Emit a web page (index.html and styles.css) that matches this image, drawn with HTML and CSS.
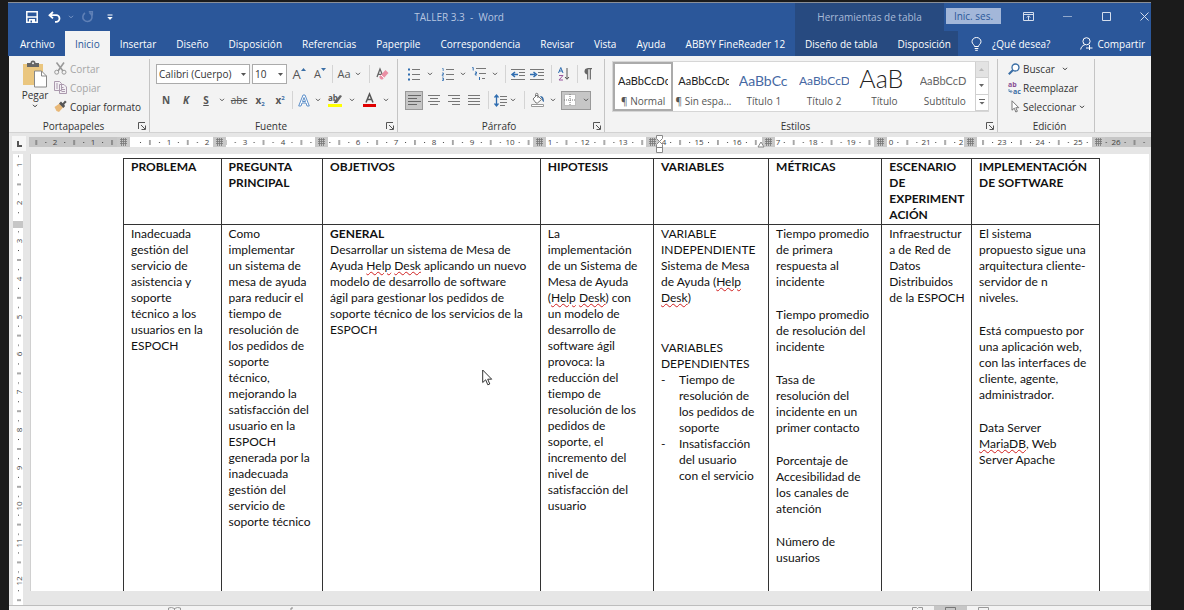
FILE: index.html
```html
<!DOCTYPE html>
<html lang="es">
<head>
<meta charset="utf-8">
<title>TALLER 3.3 - Word</title>
<link rel="stylesheet" href="styles.css">
</head>
<body>
<svg class="defs" aria-hidden="true">
  <symbol id="chev" viewBox="0 0 6 4"><path d="M1 .8 3 2.8 5 .8" fill="none" stroke="currentColor"/></symbol>
  <symbol id="tri" viewBox="0 0 5 3"><path d="M0 0h5L2.500 3z" fill="currentColor"/></symbol>
  <symbol id="launch" viewBox="0 0 8 8"><path d="M.5 7V.5H7M3 3l4 4M7.500 3.500v4h-4" fill="none" stroke="#555"/></symbol>
</svg>
<div class="app">
  <header class="titlebar">
    <div class="quick">
      <button class="q" aria-label="Guardar"><svg width="12" height="12" viewBox="0 0 12 12"><path d="M.8.8h10.400v10.400H.8z" fill="none" stroke="#fff" stroke-width="1.500"/><path d="M1 6h10" fill="none" stroke="#fff" stroke-width="1.500"/><path d="M3 8h6v3.500H3z" fill="#fff"/><path d="M4.500 9.500h1.500v2H4.500z" fill="#2b579a"/></svg></button>
      <button class="q" aria-label="Deshacer"><svg width="13" height="12" viewBox="0 0 13 12"><path d="M5 1 1.500 4.200 5 7.400M2 4.200h6.200a3.300 3.300 0 0 1 0 6.600H7" fill="none" stroke="#fff" stroke-width="1.800"/></svg></button>
      <button class="qs dim" aria-label="Opciones de deshacer"><svg width="6" height="4"><use href="#chev"/></svg></button>
      <button class="q redo" aria-label="Rehacer"><svg width="13" height="12" viewBox="0 0 13 12"><path d="M8.500 1.800a4.600 4.600 0 1 1-4.500.2M7.800.8h3.500v3.700" fill="none" stroke="currentColor" stroke-width="1.600"/></svg></button>
      <button class="q" aria-label="Personalizar"><svg width="6" height="7" viewBox="0 0 6 7"><path d="M.5 1h5" stroke="#fff"/><path d="M.3 3h5.400L3 6z" fill="#fff"/></svg></button>
    </div>
    <h1 class="title">TALLER 3.3&nbsp; -&nbsp; Word</h1>
    <div class="right">
      <div class="ctx-title">Herramientas de tabla</div>
      <button class="login">Inic. ses.</button>
      <div class="wincontrols">
        <button aria-label="Opciones de la cinta"><svg width="11" height="9" viewBox="0 0 11 9"><path d="M.5.5h10v8H.5zM.5 2.500h10M5.500 8V4M3.800 5.500 5.500 3.800l1.700 1.700" fill="none" stroke="currentColor"/></svg></button>
        <button aria-label="Minimizar"><svg width="9" height="9"><path d="M0 4.500h9" stroke="currentColor" opacity=".6"/></svg></button>
        <button aria-label="Maximizar"><svg width="9" height="9"><path d="M.5.5h8v8h-8z" fill="none" stroke="currentColor"/></svg></button>
        <button aria-label="Cerrar"><svg width="9" height="9"><path d="m.5.5 8 8m0-8-8 8" stroke="currentColor"/></svg></button>
      </div>
    </div>
  </header>
  <nav class="tabs">
    <div class="main-tabs">
      <button>Archivo</button><button class="on">Inicio</button><button>Insertar</button><button>Diseño</button><button>Disposición</button><button>Referencias</button><button>Paperpile</button><button>Correspondencia</button><button>Revisar</button><button>Vista</button><button>Ayuda</button><button>ABBYY FineReader 12</button>
    </div>
    <div class="right">
      <div class="ctx-tabs"><button>Diseño de tabla</button><button>Disposición</button></div>
      <button class="tell"><svg width="11" height="14" viewBox="0 0 11 14"><path d="M3.500 9.500C3.500 7.700 1 7 1 4.700a4.500 4.200 0 0 1 9 0C10 7 7.500 7.700 7.500 9.500zM3.700 11.500h3.600M4.200 13.300h2.600" fill="none" stroke="#fff"/></svg>¿Qué desea?</button>
      <button class="share"><svg width="13" height="13" viewBox="0 0 13 13"><circle cx="6.500" cy="4.300" r="3.600" fill="none" stroke="#fff"/><path d="M.7 12.500c.3-2.400 1.800-4 4-4.600M6 11h6.500M9.500 8v5" fill="none" stroke="#fff"/></svg>Compartir</button>
    </div>
  </nav>

  <section class="ribbon">
    <div class="group clip">
      <div class="clip-body">
        <button class="paste"><svg width="26" height="27" viewBox="0 0 26 27"><path d="M1 3h20v21H1z" fill="#eac67f"/><path d="M5 2h3.500a2.500 2.500 0 0 1 5 0H17v4H5z" fill="#666"/><circle cx="11" cy="2.200" r="1" fill="#f3f3f3"/><path d="M12.500 10h7l5 5v11h-12z" fill="#fff" stroke="#888"/><path d="M19.500 10v5h5" fill="none" stroke="#888"/></svg>Pegar<svg width="6" height="4"><use href="#chev"/></svg></button>
        <div class="stack">
          <button class="off"><svg width="13" height="13" viewBox="0 0 13 13"><path d="M2.500.5 9 9M10 .5 4 9" fill="none" stroke="#999" stroke-width="1.600"/><circle cx="2.700" cy="10.200" r="2" fill="none" stroke="#999"/><circle cx="10" cy="10.200" r="2" fill="none" stroke="#999"/></svg>Cortar</button>
          <button class="off"><svg width="13" height="13" viewBox="0 0 13 13"><path d="M.5.5h5l2 2v7h-7zM5.500 3.500h4.500l2.500 2.500v6.500h-7z" fill="#f3f0f4" stroke="#ab9aae"/><path d="M2 3h2M2 5h2M2 7h2M7.500 6.500h2M7.500 8.500h3.500M7.500 10.500h3.500" stroke="#ab9aae"/></svg>Copiar</button>
          <button><svg width="13" height="13" viewBox="0 0 13 13"><path d="m.5 7 5-3.500 3.500 4L5 12 2.500 11z" fill="#e8b878"/><path d="m5 3.500 2-2 1.700 1.700L11 .5 12.700 2 10.300 4.300l.7 1.900-1.700 1.700z" fill="#555"/></svg>Copiar formato</button>
        </div>
      </div>
      <div class="caption"><span>Portapapeles</span><button aria-label="Portapapeles, opciones"><svg width="8" height="8"><use href="#launch"/></svg></button></div>
    </div>

    <div class="group font">
      <div class="row">
        <label class="combo name"><select aria-label="Fuente"><option>Calibri (Cuerpo)</option></select><svg width="5" height="3"><use href="#tri"/></svg></label>
        <label class="combo size"><select aria-label="Tamaño"><option>10</option></select><svg width="5" height="3"><use href="#tri"/></svg></label>
        <button class="w22 big">A<svg class="sup" width="5" height="3" viewBox="0 0 5 3"><path d="M0 3h5L2.500 0z" fill="#3a6ea5"/></svg></button>
        <button class="w20 mid">A<svg class="sup" width="5" height="3" viewBox="0 0 5 3"><path d="M0 0h5L2.500 3z" fill="#3a6ea5"/></svg></button>
        <i class="sep w4"></i>
        <button class="w20 aa">Aa</button><button class="w8" aria-label="Mayúsculas"><svg width="6" height="4"><use href="#chev"/></svg></button>
        <i class="sep w14"></i>
        <button class="w12" aria-label="Borrar formato"><svg width="13" height="13" viewBox="0 0 13 13"><path d="M1 9 4 1l2.500 6M2 6.300h3.500" fill="none" stroke="#666" stroke-width="1.300"/><path d="m3.500 8.500 6-6.500L12.500 5l-6 6.500H5L3.500 10z" fill="#ea8fa4"/><path d="m5 7 3.200 3" stroke="#fff"/></svg></button>
      </div>
      <div class="row">
        <button class="w20 bold">N</button><button class="w20 bold"><em>K</em></button><button class="w20 bold"><u>S</u></button><button class="w12" aria-label="Subrayado"><svg width="6" height="4"><use href="#chev"/></svg></button>
        <button class="w22 strike">abc</button><button class="w20 bold">x<sub>2</sub></button><button class="w20 bold">x<sup>2</sup></button>
        <i class="sep w4"></i>
        <button class="w20" aria-label="Efectos de texto"><svg width="12" height="13" viewBox="0 0 12 13"><path d="M.7 12 5 1h2l4.300 11H9L8 9H4l-1 3z" fill="#fff" stroke="#5d8fc9"/><path d="m4.500 7.500 1.500-4 1.500 4z" fill="none" stroke="#5d8fc9"/></svg></button><button class="w8" aria-label="Efectos, opciones"><svg width="6" height="4"><use href="#chev"/></svg></button>
        <button class="w26 mark" aria-label="Resaltado"><svg width="15" height="14" viewBox="0 0 15 14"><path d="M0 11h14v3H0z" fill="#ff0"/><text x="0" y="8" class="ab">ab</text><path d="m6 9 6-7 2 1-5 7H6z" fill="#666"/></svg></button><button class="w8" aria-label="Resaltado, opciones"><svg width="6" height="4"><use href="#chev"/></svg></button>
        <button class="w26" aria-label="Color de fuente"><svg width="13" height="14" viewBox="0 0 13 14"><path d="M0 11h13v3H0z" fill="#e00000"/><path d="M3 9.500 6.500 1 10 9.500M4.300 6.500h4.400" fill="none" stroke="#555" stroke-width="1.500"/></svg></button><button class="w8" aria-label="Color, opciones"><svg width="6" height="4"><use href="#chev"/></svg></button>
      </div>
      <div class="caption"><span>Fuente</span><button aria-label="Fuente, opciones"><svg width="8" height="8"><use href="#launch"/></svg></button></div>
    </div>

    <div class="group para">
      <div class="row">
        <button class="w18" aria-label="Viñetas"><svg width="12" height="13" viewBox="0 0 12 13"><path d="M4 1.500h8M4 6.500h8M4 11.500h8" stroke="#777"/><path d="M0 .5h2v2H0zM0 5.500h2v2H0zM0 10.500h2v2H0z" fill="#2f6db0"/></svg></button><button class="w14" aria-label="Viñetas, opciones"><svg width="6" height="4"><use href="#chev"/></svg></button>
        <button class="w22" aria-label="Numeración"><svg width="12" height="13" viewBox="0 0 12 13"><path d="M4 1.500h8M4 6.500h8M4 11.500h8" stroke="#777"/><path d="M.3.500h.9V3M0 5h1.500v1.500H.3V8h1.400M0 10h1.500v2.500H0M.5 11.300h1" fill="none" stroke="#2f6db0" stroke-width=".8"/></svg></button><button class="w8" aria-label="Numeración, opciones"><svg width="6" height="4"><use href="#chev"/></svg></button>
        <button class="w24" aria-label="Lista multinivel"><svg width="14" height="14" viewBox="0 0 14 14"><path d="M4 1.500h10M7 6.500h7M10 11.500h3" stroke="#777"/><path d="M.3.500h.9V3.500M3 5h1.500v1.500H3.300V8h1.500M7.500 10v3" fill="none" stroke="#2f6db0"/></svg></button><button class="w8" aria-label="Lista multinivel, opciones"><svg width="6" height="4"><use href="#chev"/></svg></button>
        <i class="sep w12"></i>
        <button class="w14" aria-label="Reducir sangría"><svg width="14" height="11" viewBox="0 0 14 11"><path d="M0 .5h14M8 3.500h6M8 6.500h6M0 10.500h14" stroke="#777"/><path d="M7 5.500H2M4 3 1 5.500 4 8" fill="none" stroke="#2f6db0" stroke-width="1.500"/></svg></button>
        <button class="w24" aria-label="Aumentar sangría"><svg width="14" height="11" viewBox="0 0 14 11"><path d="M0 .5h14M8 3.500h6M8 6.500h6M0 10.500h14" stroke="#777"/><path d="M0 5.500h5M3.500 3l3 2.500-3 2.500" fill="none" stroke="#2f6db0" stroke-width="1.500"/></svg></button>
        <i class="sep w4"></i>
        <button class="w22" aria-label="Ordenar"><svg width="12" height="14" viewBox="0 0 12 14"><path d="M.5 6 2.800.5 5 6M1.300 4h3" fill="none" stroke="#2f6db0"/><path d="M1 8.500h4L1 13h4" fill="none" stroke="#9b59a0"/><path d="M9 1v11M7 10l2 2.300L11 10" fill="none" stroke="#555"/></svg></button>
        <i class="sep w4"></i>
        <button class="w16" aria-label="Mostrar todo"><svg width="9" height="12" viewBox="0 0 9 12"><path d="M4.500.7h4.500M4.700.5v11M7.300.5v11" fill="none" stroke="#666" stroke-width="1.200"/><path d="M4.700.2v6.300a3.100 3.100 0 0 1 0-6.300z" fill="#666"/></svg></button>
      </div>
      <div class="row">
        <button class="w18 pressed" aria-label="Alinear a la izquierda"><svg width="13" height="10" viewBox="0 0 13 10"><path d="M0 .5h13M0 3.500h9M0 6.500h13M0 9.500h9" stroke="#666"/></svg></button>
        <button class="w22" aria-label="Centrar"><svg width="12" height="10" viewBox="0 0 12 10"><path d="M0 .5h12M2 3.500h8M0 6.500h12M2 9.500h8" stroke="#777"/></svg></button>
        <button class="w18" aria-label="Alinear a la derecha"><svg width="12" height="10" viewBox="0 0 12 10"><path d="M0 .5h12M4 3.500h8M0 6.500h12M4 9.500h8" stroke="#777"/></svg></button>
        <button class="w22" aria-label="Justificar"><svg width="12" height="10" viewBox="0 0 12 10"><path d="M0 .5h12M0 3.500h12M0 6.500h12M0 9.500h12" stroke="#777"/></svg></button>
        <i class="sep w6"></i>
        <button class="w18" aria-label="Espaciado"><svg width="13" height="13" viewBox="0 0 13 13"><path d="M6 2.500h7M6 5.500h7M6 8.500h7M6 11.500h5" stroke="#777"/><path d="M2.500 1v11M.5 3.500l2-2.500 2 2.500M.5 9.500l2 2.500 2-2.500" fill="none" stroke="#2f6db0" stroke-width="1.300"/></svg></button><button class="w8" aria-label="Espaciado, opciones"><svg width="6" height="4"><use href="#chev"/></svg></button>
        <i class="sep w14"></i>
        <button class="w14" aria-label="Sombreado"><svg width="14" height="14" viewBox="0 0 14 14"><path d="M.5 11.500h12v2H.5z" fill="#fff" stroke="#999"/><path d="m2 6 4-4 4.500 4.500-4 3.500H5z" fill="#fff" stroke="#777"/><path d="M4.500 4V1.500a1.200 1.200 0 0 1 2.400 0V5" fill="none" stroke="#777"/><path d="M9 3c3 0 4 2 4 6-1.500-.5-2-2-2-3z" fill="#3a6ea5"/></svg></button><button class="w16" aria-label="Sombreado, opciones"><svg width="6" height="4"><use href="#chev"/></svg></button>
        <button class="w30 pressed borders" aria-label="Bordes"><svg width="12" height="12" viewBox="0 0 12 12"><path d="M0 0h12v12H0z" fill="#fff"/><path d="M.5.5h11v11H.5zM6 0v12M0 6h12" fill="none" stroke="#777" stroke-dasharray="1 1"/></svg><svg width="6" height="4"><use href="#chev"/></svg></button>
      </div>
      <div class="caption"><span>Párrafo</span><button aria-label="Párrafo, opciones"><svg width="8" height="8"><use href="#launch"/></svg></button></div>
    </div>

    <div class="group styles">
      <div class="gallery">
        <button class="style sel"><span class="s body">AaBbCcDc</span><span>¶ Normal</span></button>
        <button class="style"><span class="s body">AaBbCcDc</span><span>¶ Sin espa...</span></button>
        <button class="style"><span class="s h1">AaBbCc</span><span>Título 1</span></button>
        <button class="style"><span class="s h2">AaBbCcD</span><span>Título 2</span></button>
        <button class="style"><span class="s tt">AaB</span><span>Título</span></button>
        <button class="style"><span class="s st">AaBbCcD</span><span>Subtítulo</span></button>
        <div class="scroll">
          <button class="dis" aria-label="Subir"><svg width="5" height="3" viewBox="0 0 5 3"><path d="M0 3h5L2.500 0z" fill="#bbb"/></svg></button>
          <button aria-label="Bajar"><svg width="5" height="3"><use href="#tri"/></svg></button>
          <button aria-label="Más"><svg width="6" height="6" viewBox="0 0 6 6"><path d="M0 .5h6" stroke="#666"/><path d="M.5 3h5L3 5.500z" fill="#666"/></svg></button>
        </div>
      </div>
      <div class="caption"><span>Estilos</span><button aria-label="Estilos, opciones"><svg width="8" height="8"><use href="#launch"/></svg></button></div>
    </div>

    <div class="group edit">
      <div class="stack">
        <button><svg width="12" height="12" viewBox="0 0 12 12"><circle cx="7.500" cy="4.500" r="3.500" fill="#fff" stroke="#3a6ea5" stroke-width="1.300"/><path d="M5 7 .8 11.200" stroke="#3a6ea5" stroke-width="2"/></svg>Buscar<svg class="gap" width="6" height="4"><use href="#chev"/></svg></button>
        <button class="replace"><svg width="14" height="13" viewBox="0 0 14 13"><text x="0" y="6" class="ab2">ab</text><text x="5" y="13" class="ab2 blue">ac</text><path d="M1 8v2.500h2.500M2.500 9l1.500 1.500L2.500 12" fill="none" stroke="#3a6ea5" stroke-width=".8"/></svg>Reemplazar</button>
        <button><svg width="12" height="13" viewBox="0 0 12 13"><path d="M4 .8v9.400l2.300-2 1.500 3.800 1.600-.7-1.600-3.600h3z" fill="#fff" stroke="#777"/></svg>Seleccionar<svg width="6" height="4"><use href="#chev"/></svg></button>
      </div>
      <div class="caption"><span>Edición</span></div>
    </div>
    <div class="rest"></div>
  </section>

  <div class="hruler">
    <div class="tabstop"><svg width="5" height="6"><path d="M1 0v5h4" fill="none" stroke="#555" stroke-width="2"/></svg></div>
    <svg class="scale" height="20" role="img" aria-label="Regla horizontal">
      <defs>
        <pattern id="ticks" x="102" y="0" width="37.870" height="20" patternUnits="userSpaceOnUse"><path d="M9 9h1v1H9zM28 9h1v1h-1z" fill="#444"/><path d="M18.900 7v5" stroke="#555"/></pattern>
        <symbol id="mk" viewBox="0 0 13 10"><path d="M0 0h13v10H0z" fill="#c9c9c9"/><path d="M4.500 1v8M6.500 1v8M8.500 1v8M3 2.500h7M3 4.500h7M3 6.500h7" stroke="#777" stroke-width=".8"/></symbol>
      </defs>
      <rect y="4" width="100%" height="10" fill="#fff"/>
      <rect y="4" width="101" height="10" fill="#c6c6c6"/>
      <rect x="1063" y="4" width="100%" height="10" fill="#c6c6c6"/>
      <rect width="100%" height="20" fill="url(#ticks)"/>
      <g class="num"><text x="26" y="12">2</text><text x="64" y="12">1</text><text x="140" y="12">1</text><text x="178" y="12">2</text><text x="216" y="12">3</text><text x="254" y="12">4</text><text x="329" y="12">6</text><text x="367" y="12">7</text><text x="405" y="12">8</text><text x="443" y="12">9</text><text x="481" y="12">10</text><text x="521" y="12">1</text><text x="556" y="12">12</text><text x="594" y="12">13</text><text x="635" y="12">4</text><text x="670" y="12">15</text><text x="708" y="12">16</text><text x="749" y="12">7</text><text x="784" y="12">18</text><text x="822" y="12">19</text><text x="862" y="12">0</text><text x="897" y="12">21</text><text x="932" y="12">2</text><text x="973" y="12">23</text><text x="1011" y="12">24</text><text x="1049" y="12">25</text><text x="1087" y="12">26</text></g>
      <use href="#mk" x="88" y="4" width="13" height="10"/><use href="#mk" x="184" y="4" width="13" height="10"/><use href="#mk" x="286" y="4" width="13" height="10"/><use href="#mk" x="504" y="4" width="13" height="10"/><use href="#mk" x="617" y="4" width="13" height="10"/><use href="#mk" x="733" y="4" width="13" height="10"/><use href="#mk" x="845" y="4" width="13" height="10"/><use href="#mk" x="935" y="4" width="13" height="10"/><use href="#mk" x="1063" y="4" width="13" height="10"/>
      <path d="M627.500 2.500h6v3l-3 3 3 3v8h-6v-8l3-3-3-3zM627.500 14.500h6M729 14l3-5 3 5z" fill="#fff" stroke="#888"/>
    </svg>
  </div>

  <main class="work">
    <svg class="vruler" width="10" role="img" aria-label="Regla vertical">
      <defs><pattern id="vt" x="0" y="-26.300" width="10" height="37.800" patternUnits="userSpaceOnUse"><path d="M5 9h1v1H5zM5 28h1v1H5z" fill="#444"/><path d="M4 18.900h4" stroke="#555"/></pattern></defs>
      <rect width="10" height="100%" fill="#fff"/><rect width="10" height="100%" fill="url(#vt)"/>
      <rect y="67" width="10" height="7" fill="#c6c6c6"/>
      <g class="num"><text transform="translate(9 11) rotate(-90)">1</text><text transform="translate(9 49) rotate(-90)">2</text><text transform="translate(9 87) rotate(-90)">3</text><text transform="translate(9 125) rotate(-90)">4</text><text transform="translate(9 163) rotate(-90)">5</text><text transform="translate(9 200) rotate(-90)">6</text><text transform="translate(9 238) rotate(-90)">7</text><text transform="translate(9 276) rotate(-90)">8</text><text transform="translate(9 314) rotate(-90)">9</text><text transform="translate(9 352) rotate(-90)">10</text><text transform="translate(9 389) rotate(-90)">11</text><text transform="translate(9 427) rotate(-90)">12</text></g>
    </svg>
    <div class="page">
      <table>
        <colgroup><col class="c1"><col class="c2"><col class="c3"><col class="c4"><col class="c5"><col class="c4"><col class="c7"><col class="c8"></colgroup>
        <thead><tr><th>PROBLEMA</th><th>PREGUNTA<br>PRINCIPAL</th><th>OBJETIVOS</th><th>HIPOTESIS</th><th>VARIABLES</th><th>MÉTRICAS</th><th>ESCENARIO<br>DE<br>EXPERIMENT<br>ACIÓN</th><th>IMPLEMENTACIÓN<br>DE SOFTWARE</th></tr></thead>
        <tbody><tr>
          <td>Inadecuada<br>gestión del<br>servicio de<br>asistencia y<br>soporte<br>técnico a los<br>usuarios en la<br>ESPOCH</td>
          <td>Como<br>implementar<br>un sistema de<br>mesa de ayuda<br>para reducir el<br>tiempo de<br>resolución de<br>los pedidos de<br>soporte<br>técnico,<br>mejorando la<br>satisfacción del<br>usuario en la<br>ESPOCH<br>generada por la<br>inadecuada<br>gestión del<br>servicio de<br>soporte técnico</td>
          <td><b>GENERAL</b><br>Desarrollar un sistema de Mesa de<br>Ayuda <span class="err">Help</span> <span class="err">Desk</span> aplicando un nuevo<br>modelo de desarrollo de software<br>ágil para gestionar los pedidos de<br>soporte técnico de los servicios de la<br>ESPOCH</td>
          <td>La<br>implementación<br>de un Sistema de<br>Mesa de Ayuda<br>(<span class="err">Help</span> <span class="err">Desk</span>) con<br>un modelo de<br>desarrollo de<br>software ágil<br>provoca: la<br>reducción del<br>tiempo de<br>resolución de los<br>pedidos de<br>soporte, el<br>incremento del<br>nivel de<br>satisfacción del<br>usuario</td>
          <td><p class="wide">VARIABLE<br>INDEPENDIENTE<br>Sistema de Mesa<br>de Ayuda (<span class="err">Help</span><br><span class="err">Desk</span>)</p>VARIABLES<br>DEPENDIENTES<ul><li>Tiempo de<br>resolución de<br>los pedidos de<br>soporte</li><li>Insatisfacción<br>del usuario<br>con el servicio</li></ul></td>
          <td><p>Tiempo promedio<br>de primera<br>respuesta al<br>incidente</p><p>Tiempo promedio<br>de resolución del<br>incidente</p><p>Tasa de<br>resolución del<br>incidente en un<br>primer contacto</p><p>Porcentaje de<br>Accesibilidad de<br>los canales de<br>atención</p><p>Número de<br>usuarios</p></td>
          <td>Infraestructur<br>a de Red de<br>Datos<br>Distribuidos<br>de la ESPOCH</td>
          <td><p>El sistema<br>propuesto sigue una<br>arquitectura cliente-<br>servidor de n<br>niveles.</p><p>Está compuesto por<br>una aplicación web,<br>con las interfaces de<br>cliente, agente,<br>administrador.</p><p>Data Server<br><span class="err">MariaDB</span>, Web<br>Server Apache</p></td>
        </tr></tbody>
      </table>
      <svg class="pointer" width="11" height="17" viewBox="0 0 11 17"><path d="M.7 1v12.500l3-2.700 2.100 5 2-.8-2.100-4.800h4z" fill="#fff" stroke="#333"/></svg>
    </div>
  </main>
  <footer class="status">
    <svg width="13" height="3" viewBox="0 0 13 3"><path d="M.5 3V1l3-.5 3 1 3-1 3 .5v2M6.500 1v2" fill="none" stroke="#999"/></svg>
    <svg class="prf" width="3" height="3"><path d="M0 2h2V0" fill="none" stroke="#888"/></svg>
    <div class="views">
      <button aria-label="Modo lectura"><svg width="11" height="3"><path d="M.5 3V.5h4l1 1 1-1h4V3" fill="none" stroke="#999"/></svg></button>
      <button class="cur" aria-label="Diseño de impresión"><svg width="11" height="3"><path d="M.5 3V.5h10V3" fill="none" stroke="#777"/></svg></button>
      <button aria-label="Diseño web"><svg width="11" height="3"><path d="M.5 3V.5h10V3" fill="none" stroke="#999"/></svg></button>
    </div>
  </footer>
</div>
</body>
</html>
```
FILE: styles.css
```css
* { box-sizing: border-box; }
body { margin: 0; background: #1b1b1b; font: 10px/14px "Open Sans", "Noto Sans", sans-serif; color: #333; overflow: hidden; }
button { font: inherit; color: inherit; background: none; border: 0; padding: 0; margin: 0; display: flex; align-items: center; justify-content: center; white-space: nowrap; }
svg { display: block; flex: none; }
button svg { overflow: visible; }
.defs { position: absolute; width: 0; height: 0; }
.app { height: 100vh; padding: 2px 33px 0 8px; display: flex; flex-direction: column; }
.titlebar, .tabs { display: flex; background: #2b579a; color: #fff; flex: none; }
.titlebar { height: 29px; border-top: 1px solid #8a8f98; }
.right { width: 356px; display: flex; flex: none; }
.quick { width: 115px; display: flex; align-items: center; padding-left: 15px; }
.q { width: 21px; height: 20px; margin-right: 4px; }
.qs { width: 8px; height: 20px; margin-right: 3px; }
.dim { color: #7d9ac7; }
.redo { color: #5f80b6; }
.title { flex: 1; margin: 0; font-size: 10px; font-weight: 400; line-height: 28px; text-align: center; color: #b7c6e0; }
.ctx-title { width: 149px; background: #274a80; color: #a9bbd8; text-align: center; line-height: 28px; }
.login { width: 55px; height: 16px; margin: 5px 0 0 2px; background: #a3b7d9; color: #2b579a; }
.wincontrols { flex: 1; display: flex; height: 26px; align-items: center; justify-content: space-between; padding: 0 2px 0 22px; color: #d5deed; }
.tabs { height: 25px; }
.main-tabs { flex: 1; min-width: 0; display: flex; padding-left: 2px; }
.main-tabs button, .ctx-tabs button { padding: 0 10px; }
.main-tabs .on { background: #f3f3f3; color: #2b579a; }
.ctx-tabs { width: 163px; display: flex; background: #274a80; }
.tell { gap: 10px; margin-left: 13px; }
.share { gap: 4px; margin-left: auto; margin-right: 6px; }

.ribbon { display: flex; flex: none; height: 77px; padding-top: 3px; background: #f3f3f3; border-bottom: 1px solid #d2d2d2; margin-left: 1px; }
.group { display: flex; flex-direction: column; border-right: 1px solid #c4c4c4; height: 73px; }
.caption { margin-top: auto; height: 12px; display: flex; align-items: center; padding-right: 3px; flex: none; }
.caption span { flex: 1; text-align: center; }
.clip { width: 141px; }
.font { width: 248px; padding: 5px 0 0 6px; }
.para { width: 207px; padding: 5px 0 0 7px; }
.styles { flex: 1; padding-top: 2px; }
.edit { width: 97px; padding-left: 10px; }
.rest { width: 56px; }
.clip-body { display: flex; padding: 0 0 0 13px; }
.paste { flex-direction: column; width: 26px; margin-right: 6px; height: 51px; }
.paste svg:last-child { margin-top: 2px; }
.stack { display: flex; flex-direction: column; }
.stack button { height: 19px; gap: 3px; justify-content: flex-start; }
.stack .replace { gap: 1px; }
.off { color: #a6a6a6; }
.gap { margin-left: 4px; }
.row { display: flex; align-items: center; height: 20px; margin-bottom: 6px; flex: none; }
.row button { height: 19px; color: #555; }
.sep { height: 18px; background: linear-gradient(#d4d4d4, #d4d4d4) center / 1px 100% no-repeat; }
.w4 { width: 4px; } .w6 { width: 6px; } .w8 { width: 8px; } .w12 { width: 12px; } .w14 { width: 14px; } .w16 { width: 16px; } .w18 { width: 18px; } .w20 { width: 20px; } .w22 { width: 22px; } .w24 { width: 24px; } .w26 { width: 26px; } .w30 { width: 30px; }
.combo { display: grid; height: 20px; align-items: center; margin-right: 2px; color: #555; }
.combo > * { grid-area: 1 / 1; }
.combo svg { justify-self: end; margin-right: 4px; pointer-events: none; }
.combo select { appearance: none; width: 100%; height: 20px; border: 1px solid #ababab; border-radius: 0; background: #fff; font: inherit; color: #333; padding: 0 2px; }
.name { width: 94px; } .size { width: 35px; margin-right: 1px; }
.row .big { font-size: 13px; } .row .mid { font-size: 11px; } .aa { font-size: 11px; }
.sup { align-self: flex-start; margin-top: 3px; }
.bold { font-weight: 700; }
.strike { text-decoration: line-through; }
sub, sup { font-size: 6px; line-height: 6px; color: #3a6ea5; }
sub { align-self: flex-end; margin-bottom: 3px; } sup { align-self: flex-start; margin-top: 4px; }
.ab { font: 700 8px "Open Sans", sans-serif; fill: #555; }
.ab2 { font: 700 7px "Open Sans", sans-serif; fill: #8a4f93; }
.blue { fill: #3a6ea5; }
.row .pressed { background: #c6c6c6; outline: 1px solid #999; outline-offset: -1px; }
.borders { gap: 7px; }
.gallery { display: flex; height: 51px; background: #fff; border: 1px solid #d6d6d6; margin: 0 8px 0 7px; }
.style { flex: 1; min-width: 0; flex-direction: column; overflow: hidden; color: #555; border: 2px solid transparent; padding: 0 3px; }
.sel { border-color: #ababab; }
.s { width: 100%; height: 28px; line-height: 30px; overflow: hidden; text-align: left; color: #222; font-family: Lato, sans-serif; font-size: 11px; }
.s.h1 { font-size: 14px; color: #4668a3; }
.s.h2 { font-size: 12px; color: #4668a3; }
.s.tt { font-size: 25px; line-height: 24px; font-weight: 300; }
.s.st { color: #666; }
.scroll { width: 13px; display: flex; flex-direction: column; border-left: 1px solid #d0d0d0; color: #666; }
.scroll button { flex: 1; border-bottom: 1px solid #d0d0d0; }
.scroll .dis { background: #e3e3e3; }

.hruler { display: flex; flex: none; height: 21px; background: #e6e6e6; margin-left: 1px; }
.tabstop { width: 20px; display: flex; align-items: center; justify-content: center; background: #f6f6f6; border: 3px solid #e6e6e6; }
.scale { flex: 1; min-width: 0; }
.num { font-family: "Open Sans", sans-serif; font-size: 8px; fill: #444; text-anchor: middle; }
.work { flex: 1; min-height: 0; display: flex; background: #e6e6e6; margin-left: 1px; padding-left: 4px; }
.vruler { height: 100%; margin-right: 7px; }
.page { flex: 1; position: relative; margin: 0 2px 14px 0; padding: 4px 49px 0 92px; background: #fff; border-left: 1px solid #d0d0d0; overflow: hidden; font: 12px/16px Lato, sans-serif; font-variant-ligatures: none; color: #111; }
table { width: 100%; height: 100%; border-collapse: collapse; table-layout: fixed; border-bottom-style: hidden; }
.c1 { width: 10%; } .c2 { width: 10.400%; } .c3 { width: 22.300%; } .c4 { width: 11.600%; } .c5 { width: 11.800%; } .c7 { width: 9.200%; } .c8 { width: 13.100%; }
th, td { border: 1px solid #333; padding: 1px 0 0 7px; text-align: left; vertical-align: top; white-space: nowrap; }
th { height: 66px; padding-top: 0; font-weight: 700; }
p { margin: 0 0 17px; }
.wide { margin-bottom: 34px; }
ul { list-style: none; margin: 0; padding: 0 0 0 18px; }
li::before { content: "-"; float: left; margin-left: -18px; }
.err { text-decoration: underline wavy #d02020 1px; text-underline-offset: 1px; }
.pointer { position: absolute; left: 451px; top: 215px; }
.status { height: 5px; flex: none; display: flex; margin-left: 1px; padding-left: 159px; padding-right: 151px; background: #f3f3f3; border-top: 1px solid #bdbdbd; overflow: hidden; align-items: flex-end; }
.prf { margin-left: 109px; }
.views { margin-left: auto; display: flex; }
.views button { width: 33px; height: 4px; align-items: flex-end; }
.views .cur { background: #c6c6c6; }
```
